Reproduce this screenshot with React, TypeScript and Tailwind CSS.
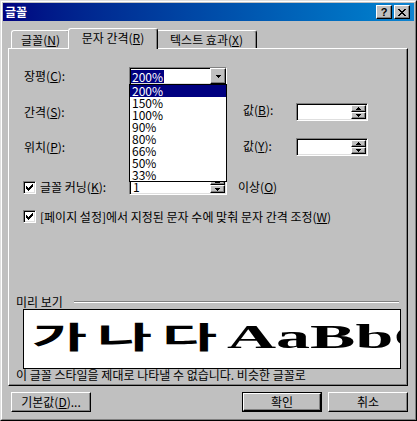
import React from "react";

const RAISED =
  "border border-t-white border-l-white border-r-black border-b-black shadow-[inset_-1px_-1px_0_#808080]";
const SUNKEN =
  "border border-t-[#808080] border-l-[#808080] border-r-white border-b-white shadow-[inset_1px_1px_0_#000,inset_-1px_-1px_0_#dfdfdf]";

function U({ children }: { children: React.ReactNode }) {
  return <span className="underline underline-offset-[1px] decoration-1">{children}</span>;
}

function Tri({ up = false }: { up?: boolean }) {
  return (
    <svg width="5" height="3" viewBox="0 0 5 3" shapeRendering="crispEdges">
      {up ? (
        <>
          <rect x="2" y="0" width="1" height="1" fill="#000" />
          <rect x="1" y="1" width="3" height="1" fill="#000" />
          <rect x="0" y="2" width="5" height="1" fill="#000" />
        </>
      ) : (
        <>
          <rect x="0" y="0" width="5" height="1" fill="#000" />
          <rect x="1" y="1" width="3" height="1" fill="#000" />
          <rect x="2" y="2" width="1" height="1" fill="#000" />
        </>
      )}
    </svg>
  );
}

const CHECK = ["......#", ".....##", "#...###", "##.###.", "#####..", ".###...", "..#...."];

function CheckBox() {
  return (
    <div className={`w-[13px] h-[13px] shrink-0 bg-white flex items-center justify-center ${SUNKEN}`}>
      <svg width="7" height="7" viewBox="0 0 7 7" shapeRendering="crispEdges">
        {CHECK.flatMap((row, y) =>
          row.split("").map((c, x) =>
            c === "#" ? <rect key={`${x}-${y}`} x={x} y={y} width="1" height="1" fill="#000" /> : null
          )
        )}
      </svg>
    </div>
  );
}

function Spin({ className, children }: { className: string; children?: React.ReactNode }) {
  return (
    <div className={`bg-white flex ${SUNKEN} ${className}`}>
      <div className="flex-1 pl-[3px] pt-[3px] flex items-center text-[12px] leading-[12px] overflow-hidden">{children}</div>
      <div className="w-[16px] flex flex-col py-px pr-px">
        <div className={`flex-1 bg-[#c0c0c0] flex items-center justify-center ${RAISED}`}>
          <Tri up />
        </div>
        <div className={`flex-1 bg-[#c0c0c0] flex items-center justify-center ${RAISED}`}>
          <Tri />
        </div>
      </div>
    </div>
  );
}

function Button({ children, def = false }: { children: React.ReactNode; def?: boolean }) {
  const inner = (
    <div className={`h-full w-full bg-[#c0c0c0] flex items-center justify-center text-[12px] leading-[12px] ${RAISED}`}>
      {children}
    </div>
  );
  return def ? <div className="w-[80px] h-[20px] border border-black">{inner}</div> : <div className="w-[80px] h-[20px]">{inner}</div>;
}

function TitleBtn({ children }: { children: React.ReactNode }) {
  return (
    <div className={`w-[16px] h-[14px] bg-[#c0c0c0] flex items-center justify-center ${RAISED}`}>{children}</div>
  );
}

const ITEMS = ["200%", "150%", "100%", "90%", "80%", "66%", "50%", "33%"];

export default function App() {
  return (
    <div className="w-[417px] h-[421px] bg-[#c0c0c0] overflow-hidden text-black font-['Noto_Sans_CJK_KR','Noto_Sans',sans-serif]">
      <div className="w-full h-full border border-t-[#dfdfdf] border-l-[#dfdfdf] border-r-black border-b-black">
        <div className="w-full h-full border border-t-white border-l-white border-r-[#808080] border-b-[#808080] p-px flex flex-col">
          {/* title bar */}
          <div className="h-[18px] shrink-0 flex items-center bg-linear-to-r from-[#000080] to-[#1084d0] pl-[2px] pr-[4px]">
            <span className="text-white font-bold text-[12px] leading-[12px]">글꼴</span>
            <div className="ml-auto flex gap-[2px]">
              <TitleBtn>
                <span className="text-[11px] leading-[11px] font-bold font-['Liberation_Sans']">?</span>
              </TitleBtn>
              <TitleBtn>
                <svg width="8" height="7" viewBox="0 0 8 7" shapeRendering="crispEdges">
                  {[0, 1, 2, 3, 4, 5, 6].map((i) => (
                    <React.Fragment key={i}>
                      <rect x={i} y={i} width="2" height="1" fill="#000" />
                      <rect x={6 - i} y={i} width="2" height="1" fill="#000" />
                    </React.Fragment>
                  ))}
                </svg>
              </TitleBtn>
            </div>
          </div>

          {/* body */}
          <div className="flex-1 flex flex-col pl-[5px] pr-[6px]">
            {/* tabs */}
            <div className="mt-[7px] h-[20px] flex items-end pl-[3px] relative z-10 text-[12px] leading-[12px]">
              <div className="w-[59px] h-[18px] border-t border-l border-r border-t-white border-l-white border-r-black rounded-t-[3px] shadow-[inset_-1px_0_0_#808080] flex items-center justify-center">
                <span>
                  글꼴(<U>N</U>)
                </span>
              </div>
              <div className="w-[90px] -mx-[2px] h-[21px] -mb-px bg-[#c0c0c0] border-t border-l border-r border-t-white border-l-white border-r-black rounded-t-[3px] shadow-[inset_-1px_0_0_#808080] flex items-center justify-center pb-[2px] relative z-10">
                <span>
                  문자 간격(<U>R</U>)
                </span>
              </div>
              <div className="w-[101px] h-[18px] border-t border-l border-r border-t-white border-l-white border-r-black rounded-t-[3px] shadow-[inset_-1px_0_0_#808080] flex items-center justify-center">
                <span>
                  텍스트 효과(<U>X</U>)
                </span>
              </div>
            </div>

            {/* panel */}
            <div className={`h-[338px] flex flex-col text-[12px] leading-[12px] ${RAISED}`}>
              {/* row 1 */}
              <div className="mt-[18px] h-[18px] flex items-center ml-[15px] relative z-20">
                <div className="w-[105px]">
                  장평(<U>C</U>):
                </div>
                <div className="w-[98px] h-[18px] relative">
                  <div className={`h-full bg-white flex ${SUNKEN}`}>
                    <div className="flex-1 flex items-center pl-[1px]">
                      <span className="bg-[#000080] text-white px-[1px] leading-[13px]">200%</span>
                    </div>
                    <div className={`w-[16px] h-full bg-[#c0c0c0] flex items-center justify-center ${RAISED}`}>
                      <Tri />
                    </div>
                  </div>
                  <div className="absolute top-[17px] left-0 w-[98px] h-[98px] bg-white border border-black flex flex-col">
                    {ITEMS.map((it, i) => (
                      <div
                        key={it}
                        className={
                          i === 0
                            ? "h-[12px] leading-[12px] pl-[2px] bg-[#000080] text-white"
                            : "h-[12px] leading-[12px] pl-[2px]"
                        }
                      >
                        {it}
                      </div>
                    ))}
                  </div>
                </div>
              </div>

              {/* row 2 */}
              <div className="mt-[18px] h-[18px] flex items-center ml-[15px]">
                <div className="w-[219px]">
                  간격(<U>S</U>):
                </div>
                <div className="w-[53px] self-start pt-px">
                  값(<U>B</U>):
                </div>
                <Spin className="w-[72px] h-[18px]" />
              </div>

              {/* row 3 */}
              <div className="mt-[17px] h-[18px] flex items-center ml-[15px]">
                <div className="w-[219px]">
                  위치(<U>P</U>):
                </div>
                <div className="w-[53px] self-start pt-[2px]">
                  값(<U>Y</U>):
                </div>
                <Spin className="w-[72px] h-[18px]" />
              </div>

              {/* row 4 */}
              <div className="mt-[19px] h-[20px] flex items-center ml-[14px]">
                <div className="w-[106px] flex items-center gap-[4px] mt-[4px]">
                  <CheckBox />
                  <span>
                    글꼴 커닝(<U>K</U>):
                  </span>
                </div>
                <Spin className="w-[98px] h-[20px]">1</Spin>
                <div className="ml-[11px] mt-[4px]">
                  이상(<U>O</U>)
                </div>
              </div>

              {/* row 5 */}
              <div className="mt-[15px] h-[13px] flex items-center gap-[4px] ml-[14px]">
                <CheckBox />
                <span>
                  [페이지 설정]에서 지정된 문자 수에 맞춰 문자 간격 조정(<U>W</U>)
                </span>
              </div>

              {/* preview */}
              <div className="mt-[73px] h-[12px] flex items-center ml-[7px] mr-[8px]">
                <span>미리 보기</span>
                <div className="flex-1 ml-[11px] h-[2px] border-t border-t-[#808080] border-b border-b-white" />
              </div>
              <div className="mt-px ml-[14px] w-[378px] h-[60px] shrink-0 bg-white border border-black overflow-hidden flex items-baseline pt-[10px] pl-[8px]">
                {["가", "나", "다"].map((c) => (
                  <span key={c} className="inline-block w-[65px] shrink-0 font-bold text-[30px] leading-none">
                    <span className="inline-block origin-left scale-x-[2]">{c}</span>
                  </span>
                ))}
                <span className="inline-block shrink-0 font-['Liberation_Serif'] font-bold text-[34px] leading-none origin-left scale-x-[2]">
                  AaBbC
                </span>
              </div>
              <div className="h-[12px] ml-[7px] whitespace-nowrap">
                이 글꼴 스타일을 제대로 나타낼 수 없습니다. 비슷한 글꼴로
              </div>
            </div>

            {/* buttons */}
            <div className="mt-[6px] h-[20px] flex items-center pl-[3px]">
              <Button>
                기본값(<U>D</U>)...
              </Button>
              <div className="ml-auto flex gap-[6px]">
                <Button def>확인</Button>
                <Button>취소</Button>
              </div>
            </div>
          </div>
        </div>
      </div>
    </div>
  );
}
